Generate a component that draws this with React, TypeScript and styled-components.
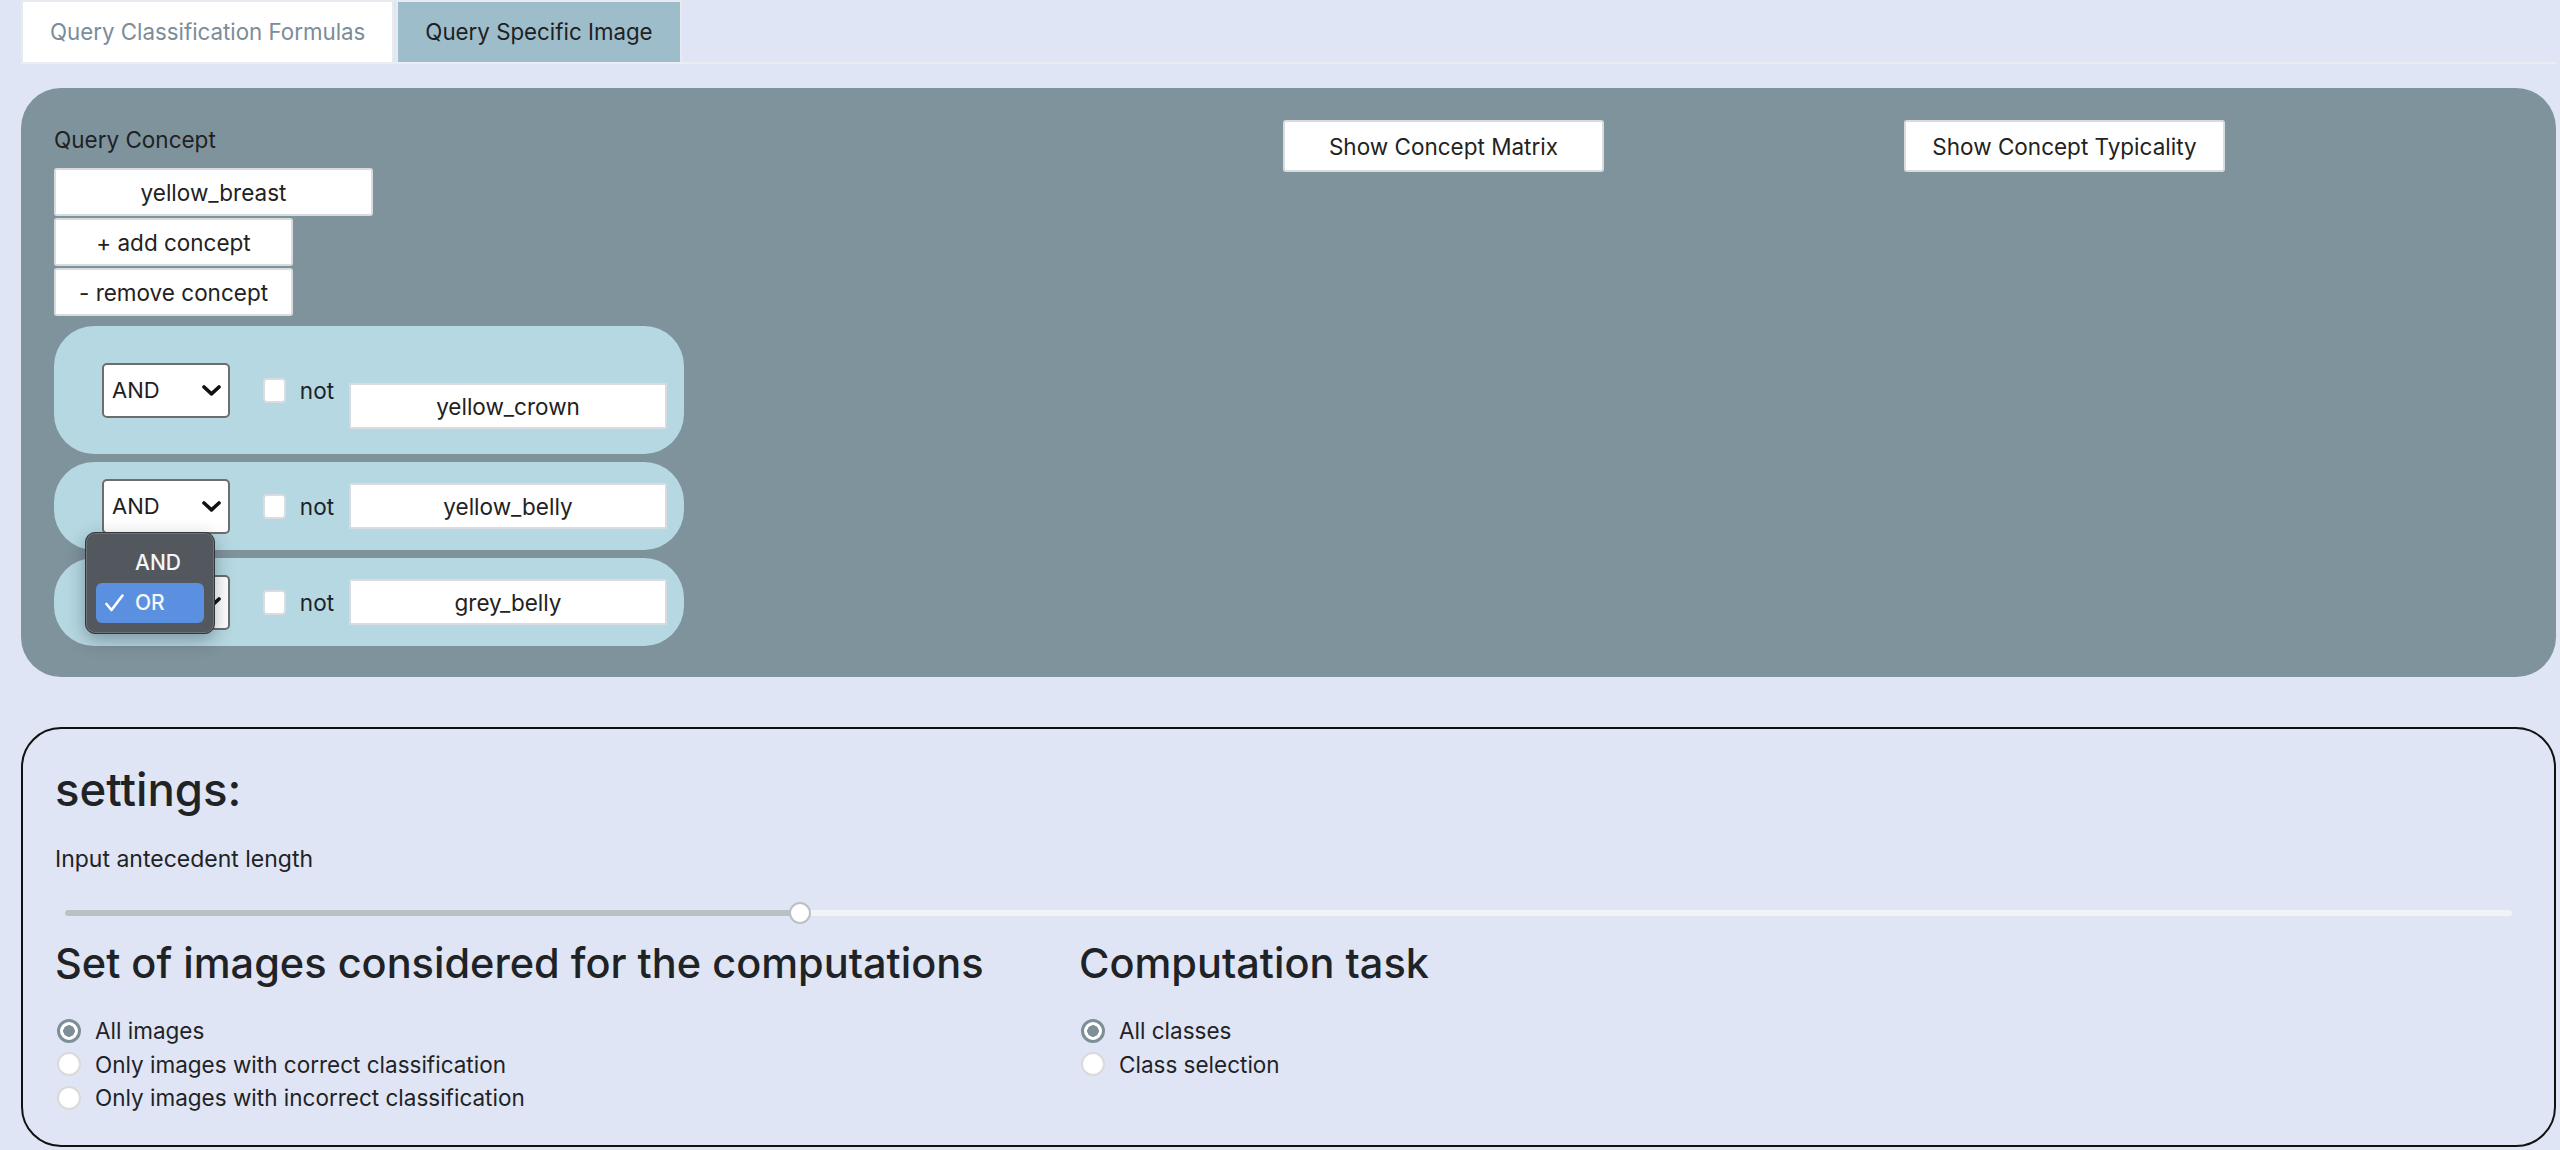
import React from "react";
import styled, { createGlobalStyle } from "styled-components";

const GlobalStyle = createGlobalStyle`
  html, body { margin: 0; padding: 0; background: #dfe5f4; }
  body { font-family: Inter, "Noto Sans", sans-serif; color: #1f2326; }
  * { box-sizing: border-box; }
`;

const Page = styled.div`
  padding: 0 4px 0 21px;
`;

const TabBar = styled.div`
  display: flex;
  gap: 2px;
  border-bottom: 2px solid #eaedf3;
`;

const Tab = styled.button<{ $active?: boolean }>`
  height: 62px;
  margin: 0;
  padding: 0 27px;
  border: 2px solid #e7eaf0;
  border-bottom: none;
  background: ${(p) => (p.$active ? "#9ebdca" : "#ffffff")};
  color: ${(p) => (p.$active ? "#1d2124" : "#7a8d98")};
  font: 400 22.3px/1 Inter, sans-serif;
  cursor: pointer;
`;

const QueryPanel = styled.section`
  margin-top: 24px;
  background: #7f939c;
  border-radius: 40px;
  display: grid;
  grid-template-columns: 2fr 1fr 1fr;
  column-gap: 13px;
  align-items: start;
  padding: 32px 44px 31px 33px;
`;

const ConceptColumn = styled.div`
  display: flex;
  flex-direction: column;
  align-items: flex-start;
`;

const FieldLabel = styled.div`
  margin-top: 7px;
  font-size: 22.5px;
  line-height: 26px;
  color: #1d2225;
`;

const ConceptInput = styled.input`
  width: 319px;
  height: 48px;
  margin-top: 15px;
  border: 2px solid #d9dcdf;
  border-radius: 3px;
  background: #fff;
  text-align: center;
  font: 400 22.5px Inter, sans-serif;
  color: #222;
  outline: none;
`;

const ActionButton = styled.button`
  width: 239px;
  height: 48px;
  margin-top: 2px;
  border: 2px solid #d9dcdf;
  border-radius: 3px;
  background: #fff;
  font: 400 22.5px Inter, sans-serif;
  color: #222;
  cursor: pointer;
`;

const ClauseRow = styled.div<{ $height: number; $gap: number }>`
  width: 630px;
  height: ${(p) => p.$height}px;
  margin-top: ${(p) => p.$gap}px;
  background: #b6d8e2;
  border-radius: 40px;
  display: flex;
  align-items: center;
  padding: 0 17px 0 48px;
`;

const SelectWrap = styled.div`
  position: relative;
`;

const SelectBox = styled.div`
  width: 128px;
  height: 55px;
  border: 2px solid #6d6d6d;
  border-radius: 5px;
  background: #fff;
  display: flex;
  align-items: center;
  justify-content: space-between;
  padding: 0 7px 0 8px;
  font-size: 22px;
  color: #1e1e1e;
`;

const Checkbox = styled.input`
  appearance: none;
  width: 25px;
  height: 25px;
  margin: 0 0 0 33px;
  border: 2px solid #d9dde0;
  border-radius: 4px;
  background: #fff;
`;

const NotLabel = styled.span`
  margin-left: 14px;
  font-size: 22.5px;
  color: #1e2226;
`;

const ClauseInput = styled.input<{ $offset: number }>`
  width: 318px;
  height: 46px;
  margin: ${(p) => p.$offset}px 0 0 15px;
  border: 2px solid #d9dcdf;
  border-radius: 2px;
  background: #fff;
  text-align: center;
  font: 400 22.5px Inter, sans-serif;
  color: #222;
  outline: none;
`;

const Menu = styled.div`
  position: absolute;
  left: -17px;
  top: 53px;
  width: 130px;
  height: 102px;
  z-index: 5;
  padding: 10px;
  background: #53585e;
  border: 1px solid #33373b;
  border-radius: 10px;
  box-shadow: inset 0 0 0 1px #6d7278, 0 6px 18px rgba(20, 30, 40, 0.35);
`;

const MenuItem = styled.div<{ $selected?: boolean }>`
  height: 40px;
  border-radius: 6px;
  display: flex;
  align-items: center;
  padding-left: 9px;
  background: ${(p) => (p.$selected ? "#5b8fe0" : "transparent")};
  color: #f5f6f7;
  font-size: 21px;
  font-weight: 500;
`;

const CheckSlot = styled.span`
  width: 30px;
  display: flex;
  align-items: center;
`;

const ShowButton = styled.button`
  width: 321px;
  height: 52px;
  border: 2px solid #d9dcdf;
  border-radius: 3px;
  background: #fff;
  font: 400 22.5px Inter, sans-serif;
  color: #222;
  cursor: pointer;
`;

const SettingsBox = styled.section`
  margin-top: 50px;
  height: 420px;
  border: 2px solid #111;
  border-radius: 40px;
  padding: 34px 32px 0 32px;
`;

const SettingsTitle = styled.h2`
  margin: 0;
  font-size: 45.5px;
  font-weight: 500;
  line-height: 53px;
  color: #1f2326;
`;

const SliderLabel = styled.div`
  margin-top: 31px;
  font-size: 23px;
  line-height: 24px;
`;

const Slider = styled.div`
  position: relative;
  height: 21px;
  margin: 31px 10px 0;
  display: flex;
  align-items: center;
`;

const Track = styled.div`
  width: 100%;
  height: 6px;
  border-radius: 3px;
  background: #f2f3f6;
  overflow: hidden;
`;

const TrackFill = styled.div`
  height: 100%;
  background: #b9c1c4;
`;

const Thumb = styled.div`
  position: absolute;
  top: 0;
  width: 22px;
  height: 22px;
  margin-left: -11px;
  border-radius: 50%;
  background: #fff;
  border: 2px solid #b9c1c4;
`;

const OptionsGrid = styled.div`
  margin-top: 18px;
  display: grid;
  grid-template-columns: 1024px 1fr;
`;

const OptionTitle = styled.h3`
  margin: 0;
  font-size: 41.5px;
  font-weight: 500;
  line-height: 45px;
  color: #1f2326;
`;

const RadioList = styled.div`
  margin-top: 28px;
  display: flex;
  flex-direction: column;
`;

const RadioRow = styled.label`
  height: 33.5px;
  display: flex;
  align-items: center;
  gap: 14px;
  font-size: 22.5px;
  color: #1f2326;
`;

const Radio = styled.input`
  appearance: none;
  margin: 0 0 0 2px;
  width: 24px;
  height: 24px;
  border-radius: 50%;
  background: #fff;
  border: 2px solid #dadada;
  &:checked {
    border: 3px solid #7d909a;
    background: radial-gradient(circle, #7d909a 0 5.5px, #fff 6px);
  }
`;

const Chevron = () => (
  <svg width="19" height="11" viewBox="0 0 19 11">
    <path d="M2 2 L9.5 8.8 L17 2" fill="none" stroke="#111" strokeWidth="3.6" strokeLinecap="round" strokeLinejoin="round" />
  </svg>
);

const Check = () => (
  <svg width="19" height="18" viewBox="0 0 19 18">
    <path d="M1.5 10 L6.5 16 L17.5 1.5" fill="none" stroke="#fff" strokeWidth="2.6" strokeLinecap="round" strokeLinejoin="round" />
  </svg>
);

type Clause = { value: string; height: number; gap: number; offset: number; open?: boolean };

const clauses: Clause[] = [
  { value: "yellow_crown", height: 128, gap: 10, offset: 32 },
  { value: "yellow_belly", height: 88, gap: 8, offset: 0, open: true },
  { value: "grey_belly", height: 88, gap: 8, offset: 0 },
];

export default function App() {
  const sliderPct = 30.05;
  return (
    <>
      <GlobalStyle />
      <Page>
        <TabBar>
          <Tab>Query Classification Formulas</Tab>
          <Tab $active>Query Specific Image</Tab>
        </TabBar>

        <QueryPanel>
          <ConceptColumn>
            <FieldLabel>Query Concept</FieldLabel>
            <ConceptInput readOnly value="yellow_breast" />
            <ActionButton>+ add concept</ActionButton>
            <ActionButton>- remove concept</ActionButton>
            {clauses.map((c) => (
              <ClauseRow key={c.value} $height={c.height} $gap={c.gap}>
                <SelectWrap>
                  <SelectBox>
                    <span>AND</span>
                    <Chevron />
                  </SelectBox>
                  {c.open && (
                    <Menu>
                      <MenuItem>
                        <CheckSlot />
                        AND
                      </MenuItem>
                      <MenuItem $selected>
                        <CheckSlot>
                          <Check />
                        </CheckSlot>
                        OR
                      </MenuItem>
                    </Menu>
                  )}
                </SelectWrap>
                <Checkbox type="checkbox" />
                <NotLabel>not</NotLabel>
                <ClauseInput readOnly value={c.value} $offset={c.offset} />
              </ClauseRow>
            ))}
          </ConceptColumn>
          <ShowButton>Show Concept Matrix</ShowButton>
          <ShowButton>Show Concept Typicality</ShowButton>
        </QueryPanel>

        <SettingsBox>
          <SettingsTitle>settings:</SettingsTitle>
          <SliderLabel>Input antecedent length</SliderLabel>
          <Slider>
            <Track>
              <TrackFill style={{ width: `${sliderPct}%` }} />
            </Track>
            <Thumb style={{ left: `${sliderPct}%` }} />
          </Slider>
          <OptionsGrid>
            <div>
              <OptionTitle>Set of images considered for the computations</OptionTitle>
              <RadioList>
                <RadioRow>
                  <Radio type="radio" name="imgs" defaultChecked />
                  All images
                </RadioRow>
                <RadioRow>
                  <Radio type="radio" name="imgs" />
                  Only images with correct classification
                </RadioRow>
                <RadioRow>
                  <Radio type="radio" name="imgs" />
                  Only images with incorrect classification
                </RadioRow>
              </RadioList>
            </div>
            <div>
              <OptionTitle>Computation task</OptionTitle>
              <RadioList>
                <RadioRow>
                  <Radio type="radio" name="task" defaultChecked />
                  All classes
                </RadioRow>
                <RadioRow>
                  <Radio type="radio" name="task" />
                  Class selection
                </RadioRow>
              </RadioList>
            </div>
          </OptionsGrid>
        </SettingsBox>
      </Page>
    </>
  );
}
